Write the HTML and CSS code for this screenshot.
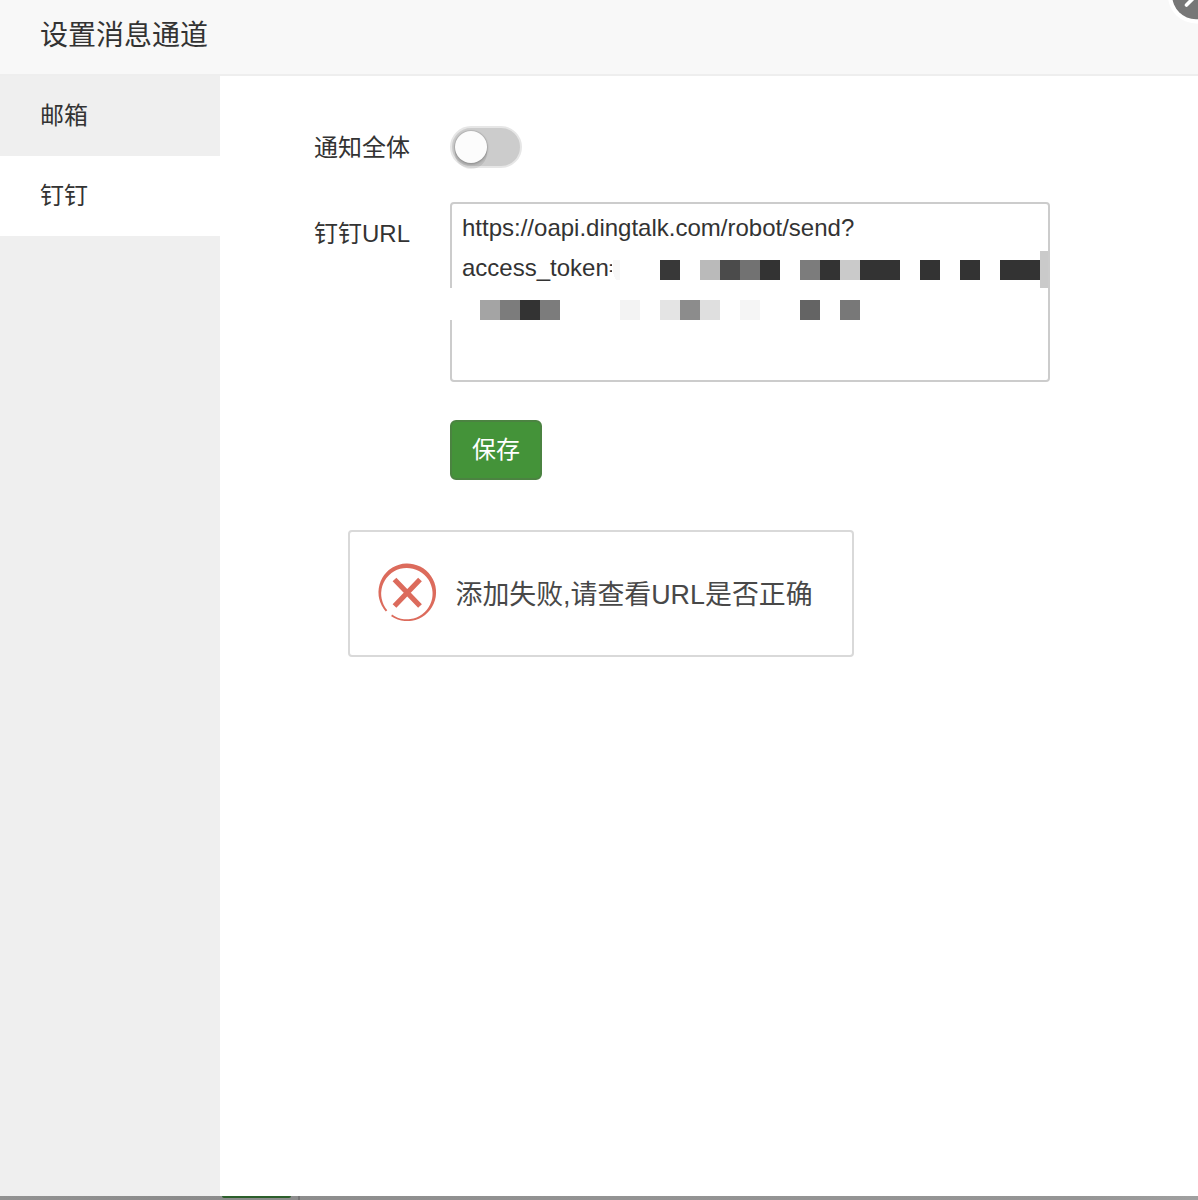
FILE: index.html
```html
<!DOCTYPE html>
<html lang="zh-CN">
<head>
<meta charset="utf-8">
<title>设置消息通道</title>
<link rel="stylesheet" href="styles.css">
</head>
<body>
<div class="dialog">
  <header class="dialog-header"><h1 class="dialog-title">设置消息通道</h1></header>
  <div class="dialog-body">
    <nav class="sidebar">
      <a class="tab">邮箱</a>
      <a class="tab tab-active">钉钉</a>
    </nav>
    <main class="content">
      <div class="row row-toggle">
        <span class="label">通知全体</span>
        <span class="switch"><span class="knob"></span></span>
      </div>
      <div class="row row-url">
        <span class="label">钉钉URL</span>
        <div class="url-box">
          <div>https://oapi.dingtalk.com/robot/send?</div>
          <div>access_token=</div>
          <svg class="mask" width="600" height="180" viewBox="450 202 600 180" shape-rendering="crispEdges">
            <path fill="#fff" d="M612 250h428v38H612zM450 288h590v32H450z"/>
            <path fill="#f7f7f7" d="M613 260h7v20h-4q-3-4-3-10z"/>
            <path fill="#383838" d="M660 260h20v20h-20z"/>
            <path fill="#bababa" d="M700 260h20v20h-20z"/>
            <path fill="#4b4b4b" d="M720 260h20v20h-20z"/>
            <path fill="#727272" d="M740 260h20v20h-20z"/>
            <path fill="#333" d="M760 260h20v20h-20zM820 260h20v20h-20zM860 260h40v20h-40zM920 260h20v20h-20zM960 260h20v20h-20zM1000 260h40v20h-40zM520 300h20v20h-20z"/>
            <path fill="#7c7c7c" d="M800 260h20v20h-20zM500 300h20v20h-20zM540 300h20v20h-20z"/>
            <path fill="#cacaca" d="M840 260h20v20h-20zM1040 251h8v37h-8z"/>
            <path fill="#a4a4a4" d="M480 300h20v20h-20z"/>
            <path fill="#f3f3f3" d="M620 300h20v20h-20z"/>
            <path fill="#e4e4e4" d="M660 300h20v20h-20z"/>
            <path fill="#8c8c8c" d="M680 300h20v20h-20z"/>
            <path fill="#dfdfdf" d="M700 300h20v20h-20z"/>
            <path fill="#f5f5f5" d="M740 300h20v20h-20z"/>
            <path fill="#646464" d="M800 300h20v20h-20z"/>
            <path fill="#787878" d="M840 300h20v20h-20z"/>
          </svg>
        </div>
      </div>
      <button class="save">保存</button>
      <div class="alert">
        <svg class="alert-icon" width="60" height="60" viewBox="0 0 60 60">
          <path fill="#dc6b5c" fill-rule="evenodd" d="M8.8 48.5A28.8 28.8 0 1 1 14.2 53.2L15 51.6A25.7 25.7 0 1 0 10.3 47.3z"/>
          <path fill="none" stroke="#dc6b5c" stroke-width="5.2" d="M17.5 16.5 43 43M43 16.5 17.5 43"/>
        </svg>
        <span class="alert-text">添加失败,请查看URL是否正确</span>
      </div>
    </main>
  </div>
</div>
<div class="backdrop"><span class="backdrop-button"></span><span class="backdrop-line"></span></div>
<svg class="close" width="30" height="28" viewBox="1168 0 30 28">
  <circle cx="1196" cy="-4.5" r="28" fill="#fff"/>
  <circle cx="1196" cy="-4.5" r="23.8" fill="#777"/>
  <path d="M1186.5 5 1205.5-14M1205.5 5 1186.5-14" stroke="#fff" stroke-width="3.6" stroke-linecap="round"/>
</svg>
</body>
</html>
```
FILE: styles.css
```css
* { box-sizing: border-box; }
body {
  margin: 0;
  width: 1198px;
  height: 1200px;
  overflow: hidden;
  position: relative;
  display: flex;
  flex-direction: column;
  font-family: "Liberation Sans", "Noto Sans CJK SC", sans-serif;
  font-size: 24px;
  line-height: 40px;
  color: #333;
}
.dialog { height: 1196px; display: flex; flex-direction: column; background: #fff; }
.dialog-header {
  height: 76px;
  padding: 16px 40px 0;
  background: #f8f8f8;
  border-bottom: 2px solid #eee;
}
.dialog-title { margin: 0; font-size: 28px; font-weight: 400; line-height: 40px; }
.dialog-body { flex: 1; display: flex; }
.sidebar { width: 220px; background: #efefef; }
.tab { display: block; height: 80px; padding: 20px 40px; }
.tab-active { background: #fff; }
.content { flex: 1; padding-top: 50px; }
.row { display: flex; gap: 40px; }
.label { width: 190px; text-align: right; }
.row-toggle { height: 76px; }
.row-toggle .label { padding-top: 2px; }
.switch {
  width: 72px;
  height: 42px;
  padding: 3px;
  border: 2px solid #e6e6e6;
  border-radius: 21px;
  background: #ccc;
}
.knob {
  display: block;
  width: 32px;
  height: 32px;
  border-radius: 50%;
  background: #fcfcfc;
  box-shadow: 0 0 0 1px rgba(0, 0, 0, .06), 0 1px 2px 1px rgba(0, 0, 0, .15), 0 6px 0 0 rgba(0, 0, 0, .08);
}
.row-url .label { padding-top: 12px; }
.url-box {
  position: relative;
  width: 600px;
  height: 180px;
  padding: 4px 10px;
  border: 2px solid #ccc;
  border-radius: 4px;
}
.mask { position: absolute; left: -2px; top: -2px; }
.save {
  display: block;
  width: 92px;
  height: 60px;
  margin: 38px 0 0 230px;
  padding: 0;
  border: 2px solid #4b8341;
  border-radius: 6px;
  background: #449339;
  color: #fff;
  font: inherit;
}
.alert {
  display: flex;
  width: 506px;
  height: 127px;
  margin: 50px 0 0 128px;
  padding: 31px 0 0 27px;
  border: 2px solid #d9d9d9;
  border-radius: 4px;
}
.alert-text {
  padding: 12px 0 0 18.5px;
  font-size: 26.9px;
  color: #484848;
  white-space: nowrap;
}
.backdrop {
  display: flex;
  height: 4px;
  padding-left: 222px;
  background: linear-gradient(90deg, #929292, #8b8b8b 15%, #939393 50%, #959595 90%, #a0a0a0);
}
.backdrop-button { width: 69px; height: 2px; background: #2c5f2b; border-radius: 0 0 3px 3px; }
.backdrop-line { width: 2px; height: 4px; margin-left: 7px; background: #777; }
.close { position: absolute; right: 0; top: 0; }
```
